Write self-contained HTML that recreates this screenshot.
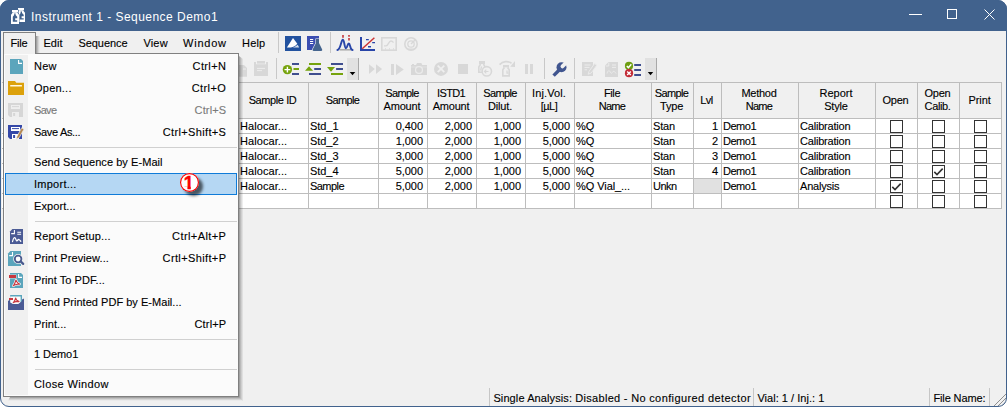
<!DOCTYPE html>
<html lang="en"><head><meta charset="utf-8"><title>Instrument 1 - Sequence Demo1</title>
<style>
*{box-sizing:border-box;margin:0;padding:0}
html,body{width:1007px;height:407px;overflow:hidden;background:#fff}
body{font-family:"Liberation Sans",sans-serif;font-size:11px;color:#000;position:relative;-webkit-text-stroke:0.12px}
.abs,.t{position:absolute}
.t{white-space:pre;line-height:13px;height:13px}
#win{position:absolute;left:0;top:0;width:1007px;height:407px;background:#f0f0f0;border-radius:9px;overflow:hidden}
#frame{position:absolute;left:0;top:0;width:1007px;height:407px;border:1px solid #41628d;border-radius:9px;pointer-events:none}
#title{position:absolute;left:0;top:0;width:1007px;height:31px;background:#41628d}
#title .cap{position:absolute;left:31px;top:9px;color:#fff;-webkit-text-stroke:0;font-size:12px;line-height:16px;letter-spacing:0.47px;white-space:pre}
.vsep{position:absolute;width:1px;background:#c8c8c8}
.hline{position:absolute;height:1px;background:#bdbdbd}
.vline{position:absolute;width:1px;background:#bdbdbd}
#menubox{position:absolute;left:3px;top:53px;width:236px;height:344px;background:#fbfbfb;border:1px solid #808080}
.shr{position:absolute;left:239px;top:56px;width:4px;height:345px;background:linear-gradient(to right,rgba(0,0,0,.38),rgba(0,0,0,.24) 33%,rgba(0,0,0,.13) 66%,rgba(0,0,0,.04));clip-path:polygon(0 0,100% 3px,100% 100%,0 calc(100% - 4px))}
.shb{position:absolute;left:8px;top:397px;width:235px;height:4px;background:linear-gradient(to bottom,rgba(0,0,0,.38),rgba(0,0,0,.22) 33%,rgba(0,0,0,.1) 66%,rgba(0,0,0,0) 95%);clip-path:polygon(2px 0,calc(100% - 4px) 0,100% 100%,0 100%)}
#menu{position:absolute;left:4px;top:55px;width:234px;height:341px}
#menu .gut{position:absolute;left:1px;top:0px;width:23px;height:340px;background:#f0f0f0}
#menu .sep{position:absolute;left:31px;width:202px;height:1px;background:#d0d0d0}
#menu .mi{position:absolute;left:30px;white-space:pre;line-height:13px}
#menu .sc{position:absolute;right:12px;white-space:pre;line-height:13px;text-align:right}
#menu .hl{position:absolute;left:1px;top:118px;width:232px;height:22px;background:#b5d7f3;border:1px solid #0f7bd8}
.cb{position:absolute;width:13px;height:13px;border:1px solid #333;background:#fff}
</style></head>
<body>
<div id="win">
<div id="title"><span class="cap">Instrument 1 - Sequence Demo1</span>
<svg class="abs" style="left:0;top:0" width="1007" height="31" viewBox="0 0 1007 31">
<rect x="18" y="8" width="6" height="2.3" fill="#fff"/>
<path d="M19 10.3 H23 L25 12.8 V22 H18 V12.8 Z" fill="#fff"/>
<path d="M20.6 11.5 H22 V13 L23.7 14.8 V16.3 H21.6 V18.3 H23.7 V19.6 H19.6 V14.8 L20.6 13 Z" fill="#41628d"/>
<path d="M11.6 9.6 H18.4 V12.2 L19.4 14.6 V24.4 H10.6 V14.6 L11.6 12.2 Z" fill="#41628d"/>
<rect x="12" y="10" width="6" height="2.3" fill="#fff"/>
<path d="M13 12.3 H17 L19 14.8 V24 H11 V14.8 Z" fill="#fff"/>
<path d="M14.2 13.5 H15.6 V15 L17.2 16.8 V18.3 H15.2 V20.3 H17.2 V21.7 H12.8 V16.8 L14.2 15 Z" fill="#41628d"/>
<path d="M909 14.5 H922" stroke="#fff" stroke-width="1" fill="none"/>
<rect x="947.5" y="9.5" width="9" height="9" stroke="#fff" stroke-width="1" fill="none"/>
<path d="M984.5 9.5 L994.5 19.5 M994.5 9.5 L984.5 19.5" stroke="#fff" stroke-width="1" fill="none"/>
</svg>
</div>
<div class="abs" style="left:36px;top:36px;width:4px;height:17px;background:linear-gradient(to right,rgba(0,0,0,0.38),rgba(0,0,0,0.12) 60%,rgba(0,0,0,0))"></div>
<div class="abs" style="left:3px;top:32px;width:33px;height:22px;border:1px solid #808080;border-bottom:none;background:#f0f0f0"></div>
<span class="t" style="left:10.4px;top:37px;letter-spacing:-0.18px">File</span>
<span class="t" style="left:43.4px;top:37px;letter-spacing:0.06px">Edit</span>
<span class="t" style="left:78.4px;top:37px;letter-spacing:-0.04px">Sequence</span>
<span class="t" style="left:143.4px;top:37px;letter-spacing:0.19px">View</span>
<span class="t" style="left:183.1px;top:37px;letter-spacing:0.76px">Window</span>
<span class="t" style="left:242px;top:37px;letter-spacing:0.19px">Help</span>
<div class="vsep" style="left:278px;top:32px;height:21px"></div>
<div class="vsep" style="left:330px;top:32px;height:21px"></div>
<div class="vsep" style="left:276px;top:58px;height:21px"></div>
<div class="vsep" style="left:544px;top:58px;height:21px"></div>
<div class="vsep" style="left:574px;top:58px;height:21px"></div>
<div class="abs" style="left:347px;top:58px;width:12px;height:22px;background:#e1e1e1;border-right:1px solid #a8a8a8"></div>
<div class="abs" style="left:645px;top:58px;width:12px;height:22px;background:#e1e1e1;border-right:1px solid #a8a8a8"></div>
<svg class="abs" style="left:0;top:0" width="1007" height="407" viewBox="0 0 1007 407">
<g id="tb1">
<rect x="285" y="36" width="16" height="15" fill="#22529f"/>
<path d="M286.9 47.6 L293 38 L297.3 43.8 C295.6 46 293.4 47 290.8 47.6 Z" fill="#fff"/>
<path d="M292.6 47.6 C295 47 296.6 45.9 297.7 44.8 L299.2 47.6 Z" fill="#d6e0ee"/>
<rect x="307" y="36" width="12" height="14" fill="#3b4eb1"/>
<path d="M310 39.5 H313.2 M310 41.5 H313.2 M310 43.5 H313.2" stroke="#fff" stroke-width="1"/>
<path d="M316 39 H319 V43 L322.2 49.6 Q322.6 51 321.2 51 H313.6 Q312.2 51 312.7 49.6 L316 43 Z" fill="#45658f" stroke="#f0f0f0" stroke-width="1.2" paint-order="stroke"/>
<path d="M339.5 49.8 H351" stroke="#a9a9a9" stroke-width="1.5"/>
<path d="M337.4 50 C340.6 50 341.2 39.8 342.8 39.8 C344.4 39.8 344.4 48.2 346 48.2 C347.4 48.2 347.4 43.5 348.8 43.5 C350.4 43.5 350 50 352.6 50" stroke="#2845a8" stroke-width="1.9" fill="none" stroke-linecap="round"/>
<path d="M343 35 V37.7 M349 35 V36.7 M349 38 V40.5" stroke="#c4353a" stroke-width="1.6"/>
<path d="M361 37 V50 H375" stroke="#2845a8" stroke-width="2" fill="none"/>
<path d="M366 39.6 H368.8 M372.2 42.6 H375 M368 46.7 H371" stroke="#2845a8" stroke-width="1.4"/>
<path d="M362.2 48.8 L374.4 37.7" stroke="#cc3333" stroke-width="1.5"/>
<rect x="381.8" y="37.8" width="14.4" height="12.4" stroke="#d8d8d8" stroke-width="1.6" fill="none"/>
<path d="M384 45.8 H386 C388.6 45.8 388.4 41 391 41 C392.4 41 393 42 393.5 42.6" stroke="#d8d8d8" stroke-width="1.3" fill="none"/>
<path d="M385.5 48.3 V49.5 M389.5 48.3 V49.5 M393.5 48.3 V49.5" stroke="#d8d8d8" stroke-width="1"/>
<circle cx="411" cy="44" r="6.2" stroke="#d8d8d8" stroke-width="1.6" fill="none"/>
<circle cx="411" cy="44" r="3.2" stroke="#d8d8d8" stroke-width="1.3" fill="none"/>
<path d="M411 44 L415 40" stroke="#d8d8d8" stroke-width="1.5"/>
<path d="M407.3 48.6 A6 6 0 0 0 414.7 48.6 Z" fill="#d8d8d8"/>
</g>
<g id="tb2">
<path d="M234 65 H244 L247 68 V76.7 H234 Z" fill="#d8d8d8"/>
<path d="M243 69 H246" stroke="#ededed" stroke-width="1"/>
<path d="M254 62 H256 V64.2 H266 V62 H268 V76 H254 Z" fill="#d8d8d8"/>
<rect x="257" y="61" width="8" height="2.6" fill="#d8d8d8"/>
<path d="M257 68.4 H265 M257 70.6 H262" stroke="#ececec" stroke-width="1"/>
<path d="M292 64 H299 M292 74 H299" stroke="#3f4e8f" stroke-width="2"/>
<path d="M293.5 69 H299" stroke="#76a30d" stroke-width="2"/>
<circle cx="287.4" cy="69.6" r="4.7" fill="#76a30d"/>
<path d="M284.5 69.6 H290.3 M287.4 66.7 V72.5" stroke="#fff" stroke-width="1.4"/>
<path d="M309 64 H321" stroke="#76a30d" stroke-width="2"/>
<path d="M314.2 69 H321 M309 74 H321" stroke="#3f4e8f" stroke-width="2"/>
<path d="M305 70.8 L309 66.3 L313.1 70.8 Z" fill="#76a30d"/>
<path d="M331 64 H343 M336.1 69 H343" stroke="#3f4e8f" stroke-width="2"/>
<path d="M331 74 H343" stroke="#76a30d" stroke-width="2"/>
<path d="M327 67.1 H335 L331 71.8 Z" fill="#76a30d"/>
<path d="M349.7 72 H355.3 L352.5 75.3 Z" fill="#000"/>
<path d="M369 64.3 L374.8 69.1 L369 73.9 Z M376 64.3 L382.1 69.1 L376 73.9 Z" fill="#d8d8d8"/>
<path d="M391 64 H394 V75 H391 Z M396 64 L403.8 69.5 L396 75 Z" fill="#d8d8d8"/>
<path d="M411 65 H412 V64 H414 V65 H416 L417 63 H421.3 L422.3 65 H427 V75 H411 Z" fill="#d8d8d8"/>
<path d="M411 67 H427" stroke="#e6e6e6" stroke-width="0.8"/>
<circle cx="419" cy="70" r="4.1" fill="#ebebeb"/>
<circle cx="419" cy="70" r="2.8" fill="#d8d8d8"/>
<circle cx="441" cy="68.9" r="7" fill="#d8d8d8"/>
<path d="M437.7 65.6 L444.3 72.2 M444.3 65.6 L437.7 72.2" stroke="#efefef" stroke-width="1.8"/>
<rect x="458" y="64" width="10" height="10" fill="#d8d8d8"/>
<rect x="479" y="61" width="6" height="3" fill="#d8d8d8"/>
<path d="M480.6 64 L478.8 67 V72.2 H485.2 V67 L483.4 64" fill="#f0f0f0" stroke="#d8d8d8" stroke-width="1.6"/>
<path d="M481.6 66.5 L480.6 70.5" stroke="#d8d8d8" stroke-width="1.4"/>
<circle cx="486.8" cy="71.3" r="4.7" fill="#f0f0f0" stroke="#d8d8d8" stroke-width="1.6"/>
<path d="M484.5 71.5 H488.5 M486.3 69.6 L484.4 71.5 L486.3 73.4" stroke="#d8d8d8" stroke-width="1.2" fill="none"/>
<path d="M499.6 64.6 C503 61 508 60.8 511.5 63.2" stroke="#d8d8d8" stroke-width="1.7" fill="none"/>
<path d="M510.2 66.8 L515 61 V67 Z" fill="#d8d8d8"/>
<rect x="503" y="65" width="6" height="2.6" fill="#d8d8d8"/>
<path d="M504.4 67.5 L502.8 69.8 V75.9 H509.2 V69.8 L507.6 67.5" fill="#f0f0f0" stroke="#d8d8d8" stroke-width="1.6"/>
<path d="M507 70.5 V73.2 H508.4" stroke="#d8d8d8" stroke-width="1.2" fill="none"/>
<rect x="525" y="64" width="3" height="10" fill="#d8d8d8"/><rect x="530" y="64" width="3" height="10" fill="#d8d8d8"/>
<path d="M553.6 75.6 L559.2 70" stroke="#40558f" stroke-width="3.4" stroke-linecap="butt"/>
<circle cx="561.5" cy="67.3" r="5" fill="#40558f"/>
<path d="M562.4 66.4 L568 60.8" stroke="#f0f0f0" stroke-width="3.8" stroke-linecap="round"/>
<rect x="582" y="62" width="11" height="14" fill="#d8d8d8"/>
<path d="M584.5 65 H590.5 M584.5 67.4 H589.5 M584.5 69.8 H587" stroke="#ececec" stroke-width="1"/>
<path d="M588.2 74.2 L589 71.4 L594.6 63.6 L596.8 65.2 L591.2 73 Z" fill="#d8d8d8" stroke="#ececec" stroke-width="0.9"/>
<path d="M608.5 62 H618 V77 H605 V65.5 Z" fill="#d8d8d8"/>
<path d="M608.8 62.8 V66 H605.8" stroke="#ececec" stroke-width="1" fill="none"/>
<path d="M612 65 H616 M612 67.4 H616" stroke="#ececec" stroke-width="1"/>
<path d="M607 73.5 C608 70 609.5 70 610.5 72.5 C611.5 74.5 612.5 72 613 71.5 C614 70.8 615 72 616 73.5" stroke="#ececec" stroke-width="1" fill="none"/>
<path d="M634.2 65 H641 M634.2 70 H641 M634.2 75 H641" stroke="#3f4e8f" stroke-width="2"/>
<circle cx="629" cy="65.9" r="4.1" fill="#6d9e12"/>
<path d="M626.8 65.9 L628.4 67.6 L631.3 64.2" stroke="#fff" stroke-width="1.4" fill="none"/>
<circle cx="629" cy="73.2" r="4.1" fill="#c22b36"/>
<path d="M627.2 71.4 L630.8 75 M630.8 71.4 L627.2 75" stroke="#fff" stroke-width="1.4"/>
<path d="M647.8 72 H653.2 L650.5 75.3 Z" fill="#000"/>
</g>
</svg>
<div class="abs" style="left:2px;top:82px;width:1000px;height:127px;background:#fff"></div>
<div class="abs" style="left:2px;top:82px;width:1000px;height:36px;background:#f0f0f0"></div>
<div class="abs" style="left:694px;top:179px;width:27px;height:14px;background:#e1e1e1"></div>
<div class="hline" style="left:2px;top:82px;width:1000px"></div>
<div class="hline" style="left:2px;top:118px;width:1000px"></div>
<div class="hline" style="left:2px;top:133px;width:1000px"></div>
<div class="hline" style="left:2px;top:148px;width:1000px"></div>
<div class="hline" style="left:2px;top:163px;width:1000px"></div>
<div class="hline" style="left:2px;top:178px;width:1000px"></div>
<div class="hline" style="left:2px;top:193px;width:1000px"></div>
<div class="hline" style="left:2px;top:208px;width:1000px"></div>
<div class="vline" style="left:238px;top:82px;height:127px"></div>
<div class="vline" style="left:308px;top:82px;height:127px"></div>
<div class="vline" style="left:378px;top:82px;height:127px"></div>
<div class="vline" style="left:427px;top:82px;height:127px"></div>
<div class="vline" style="left:476px;top:82px;height:127px"></div>
<div class="vline" style="left:525px;top:82px;height:127px"></div>
<div class="vline" style="left:574px;top:82px;height:127px"></div>
<div class="vline" style="left:651px;top:82px;height:127px"></div>
<div class="vline" style="left:693px;top:82px;height:127px"></div>
<div class="vline" style="left:721px;top:82px;height:127px"></div>
<div class="vline" style="left:798px;top:82px;height:127px"></div>
<div class="vline" style="left:875px;top:82px;height:127px"></div>
<div class="vline" style="left:917px;top:82px;height:127px"></div>
<div class="vline" style="left:959px;top:82px;height:127px"></div>
<div class="vline" style="left:1001px;top:82px;height:127px"></div>
<span class="t" style="left:248.7px;top:94px;letter-spacing:-0.41px">Sample ID</span>
<span class="t" style="left:325.8px;top:94px;letter-spacing:-0.63px">Sample</span>
<span class="t" style="left:385.2px;top:87px;letter-spacing:-0.63px">Sample</span>
<span class="t" style="left:383.6px;top:100px;letter-spacing:-0.2px">Amount</span>
<span class="t" style="left:437.1px;top:87px;letter-spacing:-0.67px">ISTD1</span>
<span class="t" style="left:432.7px;top:100px;letter-spacing:-0.22px">Amount</span>
<span class="t" style="left:483.2px;top:87px;letter-spacing:-0.63px">Sample</span>
<span class="t" style="left:487.9px;top:100px;letter-spacing:-0.13px">Dilut.</span>
<span class="t" style="left:532.0px;top:87px;letter-spacing:0.12px">Inj.Vol.</span>
<span class="t" style="left:540.7px;top:100px;letter-spacing:-0.49px">[µL]</span>
<span class="t" style="left:604.0px;top:87px;letter-spacing:-0.41px">File</span>
<span class="t" style="left:598.7px;top:100px;letter-spacing:-0.69px">Name</span>
<span class="t" style="left:654.8px;top:87px;letter-spacing:-0.63px">Sample</span>
<span class="t" style="left:660.0px;top:100px;letter-spacing:-0.19px">Type</span>
<span class="t" style="left:700.3px;top:94px;letter-spacing:-0.55px">Lvl</span>
<span class="t" style="left:741.4px;top:87px;letter-spacing:-0.25px">Method</span>
<span class="t" style="left:745.7px;top:100px;letter-spacing:-0.69px">Name</span>
<span class="t" style="left:819.5px;top:87px;letter-spacing:-0.0px">Report</span>
<span class="t" style="left:824.2px;top:100px;letter-spacing:-0.17px">Style</span>
<span class="t" style="left:882.6px;top:94px;letter-spacing:-0.28px">Open</span>
<span class="t" style="left:924.6px;top:87px;letter-spacing:-0.3px">Open</span>
<span class="t" style="left:924.6px;top:100px;letter-spacing:-0.39px">Calib.</span>
<span class="t" style="left:968.4px;top:94px;letter-spacing:-0.06px">Print</span>
<span class="t" style="left:240px;top:120px;letter-spacing:0.07px">Halocar...</span>
<span class="t" style="left:310px;top:120px;letter-spacing:-0.05px">Std_1</span>
<span class="t" style="left:395.7px;top:120px;letter-spacing:-0.04px">0,400</span>
<span class="t" style="left:444.7px;top:120px;letter-spacing:-0.04px">2,000</span>
<span class="t" style="left:493.7px;top:120px;letter-spacing:-0.04px">1,000</span>
<span class="t" style="left:542.7px;top:120px;letter-spacing:-0.04px">5,000</span>
<span class="t" style="left:576px;top:120px;letter-spacing:-0.12px">%Q</span>
<span class="t" style="left:653px;top:120px;letter-spacing:-0.21px">Stan</span>
<span class="t" style="left:712.0px;top:120px;letter-spacing:-0.12px">1</span>
<span class="t" style="left:723px;top:120px;letter-spacing:-0.49px">Demo1</span>
<span class="t" style="left:800px;top:120px;letter-spacing:-0.2px">Calibration</span>
<div class="cb" style="left:890px;top:120px"></div>
<div class="cb" style="left:932px;top:120px"></div>
<div class="cb" style="left:974px;top:120px"></div>
<span class="t" style="left:240px;top:135px;letter-spacing:0.07px">Halocar...</span>
<span class="t" style="left:310px;top:135px;letter-spacing:-0.05px">Std_2</span>
<span class="t" style="left:395.7px;top:135px;letter-spacing:-0.04px">1,000</span>
<span class="t" style="left:444.7px;top:135px;letter-spacing:-0.04px">2,000</span>
<span class="t" style="left:493.7px;top:135px;letter-spacing:-0.04px">1,000</span>
<span class="t" style="left:542.7px;top:135px;letter-spacing:-0.04px">5,000</span>
<span class="t" style="left:576px;top:135px;letter-spacing:-0.12px">%Q</span>
<span class="t" style="left:653px;top:135px;letter-spacing:-0.21px">Stan</span>
<span class="t" style="left:712.0px;top:135px;letter-spacing:-0.12px">2</span>
<span class="t" style="left:723px;top:135px;letter-spacing:-0.49px">Demo1</span>
<span class="t" style="left:800px;top:135px;letter-spacing:-0.2px">Calibration</span>
<div class="cb" style="left:890px;top:135px"></div>
<div class="cb" style="left:932px;top:135px"></div>
<div class="cb" style="left:974px;top:135px"></div>
<span class="t" style="left:240px;top:150px;letter-spacing:0.07px">Halocar...</span>
<span class="t" style="left:310px;top:150px;letter-spacing:-0.05px">Std_3</span>
<span class="t" style="left:395.7px;top:150px;letter-spacing:-0.04px">3,000</span>
<span class="t" style="left:444.7px;top:150px;letter-spacing:-0.04px">2,000</span>
<span class="t" style="left:493.7px;top:150px;letter-spacing:-0.04px">1,000</span>
<span class="t" style="left:542.7px;top:150px;letter-spacing:-0.04px">5,000</span>
<span class="t" style="left:576px;top:150px;letter-spacing:-0.12px">%Q</span>
<span class="t" style="left:653px;top:150px;letter-spacing:-0.21px">Stan</span>
<span class="t" style="left:712.0px;top:150px;letter-spacing:-0.12px">3</span>
<span class="t" style="left:723px;top:150px;letter-spacing:-0.49px">Demo1</span>
<span class="t" style="left:800px;top:150px;letter-spacing:-0.2px">Calibration</span>
<div class="cb" style="left:890px;top:150px"></div>
<div class="cb" style="left:932px;top:150px"></div>
<div class="cb" style="left:974px;top:150px"></div>
<span class="t" style="left:240px;top:165px;letter-spacing:0.07px">Halocar...</span>
<span class="t" style="left:310px;top:165px;letter-spacing:-0.05px">Std_4</span>
<span class="t" style="left:395.7px;top:165px;letter-spacing:-0.04px">5,000</span>
<span class="t" style="left:444.7px;top:165px;letter-spacing:-0.04px">2,000</span>
<span class="t" style="left:493.7px;top:165px;letter-spacing:-0.04px">1,000</span>
<span class="t" style="left:542.7px;top:165px;letter-spacing:-0.04px">5,000</span>
<span class="t" style="left:576px;top:165px;letter-spacing:-0.12px">%Q</span>
<span class="t" style="left:653px;top:165px;letter-spacing:-0.21px">Stan</span>
<span class="t" style="left:712.0px;top:165px;letter-spacing:-0.12px">4</span>
<span class="t" style="left:723px;top:165px;letter-spacing:-0.49px">Demo1</span>
<span class="t" style="left:800px;top:165px;letter-spacing:-0.2px">Calibration</span>
<div class="cb" style="left:890px;top:165px"></div>
<div class="cb" style="left:932px;top:165px"><svg width="11" height="11" viewBox="0 0 11 11" style="display:block"><path d="M1.3 5.9 L4 8.5 L9.7 2.6" stroke="#333" stroke-width="1.6" fill="none"/></svg></div>
<div class="cb" style="left:974px;top:165px"></div>
<span class="t" style="left:240px;top:180px;letter-spacing:0.07px">Halocar...</span>
<span class="t" style="left:310px;top:180px;letter-spacing:-0.55px">Sample</span>
<span class="t" style="left:395.7px;top:180px;letter-spacing:-0.04px">5,000</span>
<span class="t" style="left:444.7px;top:180px;letter-spacing:-0.04px">2,000</span>
<span class="t" style="left:493.7px;top:180px;letter-spacing:-0.04px">1,000</span>
<span class="t" style="left:542.7px;top:180px;letter-spacing:-0.04px">5,000</span>
<span class="t" style="left:576px;top:180px;letter-spacing:-0.07px">%Q Vial_...</span>
<span class="t" style="left:653px;top:180px;letter-spacing:-0.52px">Unkn</span>
<span class="t" style="left:723px;top:180px;letter-spacing:-0.49px">Demo1</span>
<span class="t" style="left:800px;top:180px;letter-spacing:-0.21px">Analysis</span>
<div class="cb" style="left:890px;top:180px"><svg width="11" height="11" viewBox="0 0 11 11" style="display:block"><path d="M1.3 5.9 L4 8.5 L9.7 2.6" stroke="#333" stroke-width="1.6" fill="none"/></svg></div>
<div class="cb" style="left:932px;top:180px"></div>
<div class="cb" style="left:974px;top:180px"></div>
<div class="cb" style="left:890px;top:195px"></div>
<div class="cb" style="left:932px;top:195px"></div>
<div class="cb" style="left:974px;top:195px"></div>
<div class="vsep" style="left:489px;top:388px;height:18px;background:#c6c6c6"></div>
<div class="vsep" style="left:753px;top:388px;height:18px;background:#c6c6c6"></div>
<div class="vsep" style="left:929px;top:388px;height:18px;background:#c6c6c6"></div>
<div class="vsep" style="left:989px;top:388px;height:18px;background:#c6c6c6"></div>
<span class="t" style="left:493.4px;top:392px"><span style="letter-spacing:0.106px">Single Analysis: </span><span style="letter-spacing:0.301px">Disabled - No </span><span style="letter-spacing:0.402px">configured detector</span></span>
<span class="t" style="left:757.4px;top:392px;letter-spacing:0.03px">Vial: 1 / Inj.: 1</span>
<span class="t" style="left:933.4px;top:392px;letter-spacing:-0.12px">File Name:</span>
<svg class="abs" style="left:992px;top:392px" width="14" height="14" viewBox="0 0 14 14"><path d="M2 14 L14 2 M6 14 L14 6 M10 14 L14 10" stroke="#8e8e8e" stroke-width="1"/></svg>
<div class="shr"></div><div class="shb"></div><div id="menubox"></div><div class="abs" style="left:4px;top:53px;width:31px;height:1px;background:#f0f0f0"></div>
<div id="menu"><div class="gut"></div>
<div class="hl"></div>
<span class="mi" style="top:5px;letter-spacing:0.23px;color:#000">New</span>
<span class="mi" style="left:188.6px;top:5px;letter-spacing:0.37px;color:#000">Ctrl+N</span>
<span class="mi" style="top:27px;letter-spacing:0.23px;color:#000">Open...</span>
<span class="mi" style="left:187.7px;top:27px;letter-spacing:0.42px;color:#000">Ctrl+O</span>
<span class="mi" style="top:49px;letter-spacing:-0.69px;color:#7a7a7a">Save</span>
<span class="mi" style="left:190.6px;top:49px;letter-spacing:0.14px;color:#7a7a7a">Ctrl+S</span>
<span class="mi" style="top:71px;letter-spacing:-0.32px;color:#000">Save As...</span>
<span class="mi" style="left:158.7px;top:71px;letter-spacing:0.36px;color:#000">Ctrl+Shift+S</span>
<div class="sep" style="top:92px"></div>
<span class="mi" style="top:101px;letter-spacing:0.06px;color:#000">Send Sequence by E-Mail</span>
<span class="mi" style="top:123px;letter-spacing:0.26px;color:#000">Import...</span>
<span class="mi" style="top:145px;letter-spacing:0.09px;color:#000">Export...</span>
<div class="sep" style="top:166px"></div>
<span class="mi" style="top:175px;letter-spacing:0.19px;color:#000">Report Setup...</span>
<span class="mi" style="left:168.1px;top:175px;letter-spacing:0.41px;color:#000">Ctrl+Alt+P</span>
<span class="mi" style="top:197px;letter-spacing:0.1px;color:#000">Print Preview...</span>
<span class="mi" style="left:158.6px;top:197px;letter-spacing:0.37px;color:#000">Crtl+Shift+P</span>
<span class="mi" style="top:219px;letter-spacing:0.05px;color:#000">Print To PDF...</span>
<span class="mi" style="top:241px;letter-spacing:0.03px;color:#000">Send Printed PDF by E-Mail...</span>
<span class="mi" style="top:263px;letter-spacing:0.08px;color:#000">Print...</span>
<span class="mi" style="left:190.5px;top:263px;letter-spacing:0.16px;color:#000">Ctrl+P</span>
<div class="sep" style="top:284px"></div>
<span class="mi" style="top:293px;letter-spacing:-0.06px;color:#000">1 Demo1</span>
<div class="sep" style="top:314px"></div>
<span class="mi" style="top:323px;letter-spacing:0.38px;color:#000">Close Window</span>
<svg class="abs" style="left:-4px;top:-55px" width="60" height="340" viewBox="0 0 60 340">
<path d="M10 59 H21 L23 61 V74 H10 Z" fill="#5ba5bc"/>
<path d="M18.6 60 V63.4 H22" stroke="#fff" stroke-width="1.1" fill="none"/>
<path d="M8 81 H15 L16.3 82.7 H24 V95 H8 Z" fill="#dca10b"/>
<path d="M10.2 85.7 H21.9" stroke="#fff8e0" stroke-width="1.4"/>
<path d="M8 103 H23 V117 H10 L8 115 Z" fill="#d6d6d6"/>
<rect x="11" y="105" width="9" height="4" fill="#eeeeee"/><path d="M12 106.6 H19" stroke="#d6d6d6" stroke-width="1"/>
<rect x="12" y="112" width="7" height="5" fill="#eeeeee"/><rect x="13.1" y="113" width="2" height="3" fill="#d6d6d6"/>
<path d="M8 125 H22 V139 H10 L8 137 Z" fill="#3548a8"/>
<rect x="11" y="127" width="9" height="4" fill="#fff"/><path d="M12 128.6 H19" stroke="#3548a8" stroke-width="1"/>
<rect x="12" y="134" width="7" height="5" fill="#fff"/><rect x="13.1" y="135" width="2" height="3" fill="#3548a8"/>
<path d="M16.2 139.4 L17 136.4 L21.6 127.8 L24 129.2 L19.2 137.6 Z" fill="#b5874f" stroke="#f0f0f0" stroke-width="0.7"/>
<path d="M12.4 229 H23 V244 H10 V231.5 Z" fill="#4b5b95"/>
<path d="M14.4 230 V233.6 H11.2" stroke="#fff" stroke-width="1.1" fill="none"/>
<path d="M17.3 232.2 H21.1 M17.3 234.3 H21.1" stroke="#fff" stroke-width="1.1"/>
<path d="M12.5 241.6 C13.2 239 13.8 237.7 14.7 237.7 C15.8 237.7 16 240.9 16.9 240.9 C17.6 240.9 17.8 239.3 18.5 239.3 C19.4 239.3 20 240.4 20.8 241.3" stroke="#fff" stroke-width="1.2" fill="none" stroke-linecap="round"/>
<path d="M10.4 251 H21 V266 H8 V253.5 Z" fill="#5ba5bc"/>
<path d="M12.5 252 V255.6 H9.2" stroke="#fff" stroke-width="1.1" fill="none"/>
<path d="M20.8 261.6 L23.4 264" stroke="#f0f0f0" stroke-width="4" stroke-linecap="round"/>
<circle cx="18.1" cy="259" r="4.2" fill="#f4f4f4" stroke="#f0f0f0" stroke-width="1.4"/>
<circle cx="18.1" cy="259" r="3.3" fill="#fdfdfd" stroke="#4a5b8f" stroke-width="1.8"/>
<path d="M20.6 261.4 L23.2 263.9" stroke="#4a5b8f" stroke-width="2.2" stroke-linecap="round"/>
<path d="M10 273 H21 L23 275 V288 H10 Z" fill="#5ba5bc"/>
<path d="M18.6 274 V277.4 H22" stroke="#fff" stroke-width="1.1" fill="none"/>
<rect x="9" y="275" width="7" height="3" fill="#c8373f" stroke="#f0f0f0" stroke-width="0.8" paint-order="stroke"/>
<path d="M16 280 C15.4 282 14.6 284 13.4 285.8 M16 280.2 C16.6 282 17.8 283.4 19.4 284.2 M13.2 285.6 C15 284.6 17.4 284 19.6 284" stroke="#fff" stroke-width="2.4" fill="none" stroke-linecap="round"/>
<path d="M16 280 C15.4 282 14.6 284 13.4 285.8 M16 280.2 C16.6 282 17.8 283.4 19.4 284.2 M13.2 285.6 C15 284.6 17.4 284 19.6 284" stroke="#c8373f" stroke-width="1.1" fill="none" stroke-linecap="round"/>
<path d="M8 301 L10.2 299.5 V295 H22 V299.5 L24 298.5 V310 H8 Z" fill="#4b5b95"/>
<rect x="10.2" y="295" width="11.8" height="9" fill="#fbfbfb"/>
<path d="M10.2 295.7 H22 M21.3 295 V303" stroke="#5ba5bc" stroke-width="1.4" fill="none"/>
<rect x="9" y="298" width="4" height="2" fill="#c8373f"/>
<path d="M15.7 298 C15.3 299.6 14.6 301.2 13.4 302.6 M15.7 298.2 C16.2 299.8 17.2 301 18.8 301.6 M13.2 302.4 C15 301.6 17 301.4 19 301.4" stroke="#c8373f" stroke-width="1.1" fill="none" stroke-linecap="round"/>
<path d="M8 301.2 L16 305.8 L24 299.6 V310 H8 Z" fill="#4b5b95"/>
</svg>
<div class="abs" style="left:176px;top:118px;width:19px;height:19px;border-radius:50%;background:#fff;box-shadow:inset 0 0 0 1.15px #f80000,4px 4px 3px rgba(0,0,0,0.6)"><span class="abs" style="left:3.7px;top:0.7px;font-weight:bold;font-size:18px;line-height:18px;color:#fa0000;-webkit-text-stroke:0.5px #fa0000;clip-path:polygon(0 0,7.1px 0,7.1px 18px,3.8px 18px,3.8px 13px,0 13px)">1</span></div>
</div>
</div>
<div id="frame"></div>
</body></html>
